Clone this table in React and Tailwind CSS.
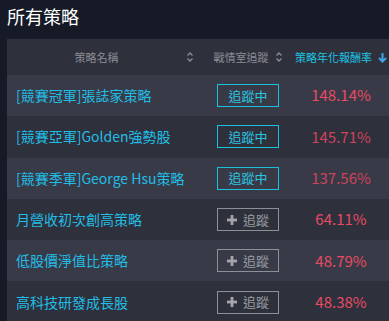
const rows = [
  { name: "[競賽冠軍]張誌家策略", tracking: true, ret: "148.14%", dim: false },
  { name: "[競賽亞軍]Golden強勢股", tracking: true, ret: "145.71%", dim: true },
  { name: "[競賽季軍]George Hsu策略", tracking: true, ret: "137.56%", dim: true },
  { name: "月營收初次創高策略", tracking: false, ret: "64.11%", dim: false },
  { name: "低股價淨值比策略", tracking: false, ret: "48.79%", dim: false },
  { name: "高科技研發成長股", tracking: false, ret: "48.38%", dim: false },
];

function SortIcon() {
  return (
    <svg width="8" height="12" viewBox="0 0 8 12" fill="none" stroke="#8b8d95" strokeWidth="1.4">
      <path d="M1.5 4.5 L4 2 L6.5 4.5" />
      <path d="M1.5 7.5 L4 10 L6.5 7.5" />
    </svg>
  );
}

function DownArrow() {
  return (
    <svg width="9" height="11" viewBox="0 0 9 11" fill="none" stroke="#3fa6e4" strokeWidth="2">
      <path d="M4.5 1 L4.5 9" />
      <path d="M1 6 L4.5 9.5 L8 6" />
    </svg>
  );
}

function PlusIcon() {
  return (
    <svg width="10" height="10" viewBox="0 0 10 10" fill="#a3a5ab">
      <rect x="3.6" y="0" width="2.8" height="10" />
      <rect x="0" y="3.6" width="10" height="2.8" />
    </svg>
  );
}

export default function App() {
  return (
    <div
      className="w-[389px] h-[321px] overflow-hidden bg-[#161a26] pl-[7px]"
      style={{ fontFamily: '"Noto Sans CJK TC", "Noto Sans", sans-serif' }}
    >
      <h1 className="h-[39px] pt-[3px] text-[18px] leading-[26px] text-white">所有策略</h1>

      <div className="w-[382px]">
        {/* header */}
        <div className="flex h-[36px] items-center bg-[#2e313c] text-[11px]">
          <div className="flex w-[196px] items-center pr-[9px]">
            <span className="flex-1 text-center text-[#8b8d95]">策略名稱</span>
            <SortIcon />
          </div>
          <div className="flex w-[90px] items-center justify-center gap-[6px] text-[#8b8d95]">
            <span>戰情室追蹤</span>
            <SortIcon />
          </div>
          <div className="flex w-[96px] items-center justify-center gap-[6px] text-[#1fc3e3]">
            <span>策略年化報酬率</span>
            <DownArrow />
          </div>
        </div>

        {rows.map((r, i) => (
          <div
            key={r.name}
            className={
              "flex h-[41.3px] items-center " +
              (i % 2 === 0 ? "bg-[#383b47]" : "bg-[#2e313c]")
            }
          >
            <div className="w-[196px] pl-[9px] text-[14px] text-[#22bde6] whitespace-nowrap">
              {r.name}
            </div>
            <div className="flex w-[90px] justify-center">
              {r.tracking ? (
                <div className="flex h-[23px] w-[62px] items-center justify-center border border-[#1cc0dc] text-[13px] text-[#2cc3e0]">
                  追蹤中
                </div>
              ) : (
                <div className="flex h-[23px] w-[62px] items-center justify-center gap-[6px] border border-[#8e9097] text-[13px] text-[#9a9ca3]">
                  <PlusIcon />
                  <span>追蹤</span>
                </div>
              )}
            </div>
            <div
              className={
                "w-[96px] text-center text-[15px] " +
                (r.dim ? "text-[#cf435c]" : "text-[#e94a64]")
              }
            >
              {r.ret}
            </div>
          </div>
        ))}
      </div>
    </div>
  );
}
